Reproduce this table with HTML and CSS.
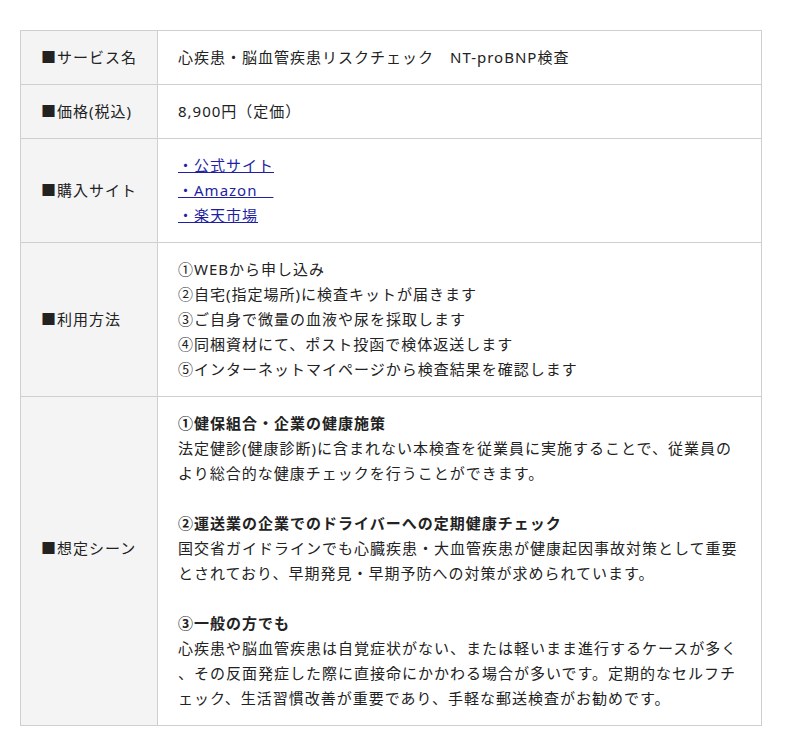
FILE: index.html
```html
<!DOCTYPE html>
<html lang="ja">
<head>
<meta charset="utf-8">
<title>NT-proBNP検査</title>
<link rel="stylesheet" href="styles.css">
</head>
<body>
<div class="wrap">
<table class="spec">
  <tr>
    <th>■サービス名</th>
    <td>心疾患・脳血管疾患リスクチェック　NT-proBNP検査</td>
  </tr>
  <tr>
    <th>■価格(税込)</th>
    <td>8,900円（定価）</td>
  </tr>
  <tr>
    <th>■購入サイト</th>
    <td><a href="#">・公式サイト</a><br><a href="#">・Amazon　</a><br><a href="#">・楽天市場</a></td>
  </tr>
  <tr>
    <th>■利用方法</th>
    <td>①WEBから申し込み<br>②自宅(指定場所)に検査キットが届きます<br>③ご自身で微量の血液や尿を採取します<br>④同梱資材にて、ポスト投函で検体返送します<br>⑤インターネットマイページから検査結果を確認します</td>
  </tr>
  <tr>
    <th class="th-raised">■想定シーン</th>
    <td><strong>①健保組合・企業の健康施策</strong><br>法定健診(健康診断)に含まれない本検査を従業員に実施することで、従業員の<br>より総合的な健康チェックを行うことができます。<br><br><strong>②運送業の企業でのドライバーへの定期健康チェック</strong><br>国交省ガイドラインでも心臓疾患・大血管疾患が健康起因事故対策として重要<br>とされており、早期発見・早期予防への対策が求められています。<br><br><strong>③一般の方でも</strong><br>心疾患や脳血管疾患は自覚症状がない、または軽いまま進行するケースが多く<br>、その反面発症した際に直接命にかかわる場合が多いです。定期的なセルフチ<br>ェック、生活習慣改善が重要であり、手軽な郵送検査がお勧めです。</td>
  </tr>
</table>
</div>
</body>
</html>
```

FILE: styles.css
```css
html, body {
  margin: 0;
  padding: 0;
  background: #fff;
}

.wrap {
  padding: 30px 0 0 20px;
}

.spec {
  width: 742px;
  border-collapse: collapse;
  font-family: "Noto Sans", "Noto Sans CJK JP", sans-serif;
  font-size: 15px;
  line-height: 25px;
  letter-spacing: 1px;
  color: #222;
}

.spec th,
.spec td {
  border: 1px solid #cfcfcf;
  padding: 14px 20px;
  vertical-align: middle;
  text-align: left;
}

.spec th {
  width: 96px;
  background: #f4f4f4;
  font-weight: normal;
  white-space: nowrap;
}

.spec th.th-raised {
  padding-bottom: 40px;
}

.spec td {
  white-space: nowrap;
}

.spec strong {
  font-weight: bold;
}

.spec a {
  color: #1f1fa3;
  text-decoration: underline;
}
```
